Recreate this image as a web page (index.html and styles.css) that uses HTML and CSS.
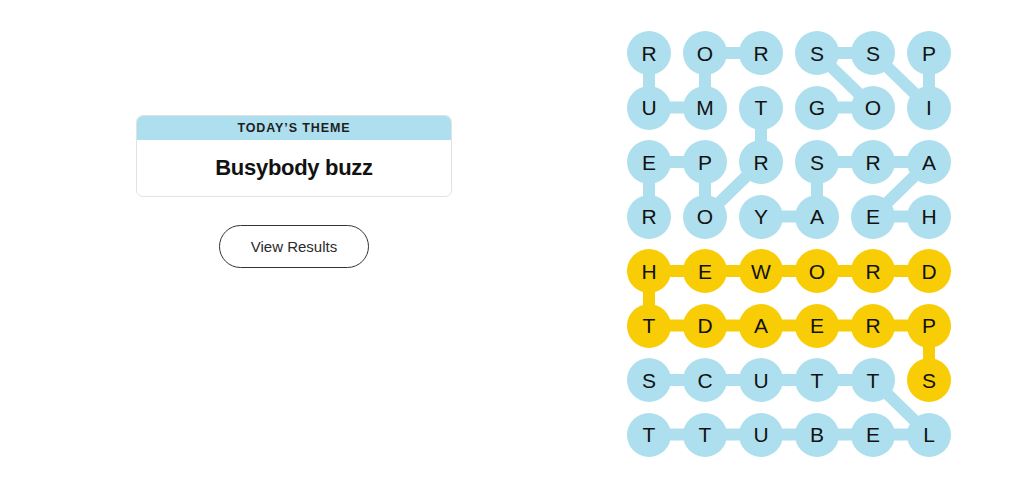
FILE: index.html
```html
<!DOCTYPE html>
<html lang="en">
<head>
<meta charset="utf-8">
<title>Strands</title>
<link rel="stylesheet" href="styles.css">
</head>
<body>
<main class="page">
  <section class="side">
    <div class="theme-card">
      <div class="theme-head">TODAY’S THEME</div>
      <div class="theme-body">Busybody buzz</div>
    </div>
    <button class="results-btn" type="button">View Results</button>
  </section>
  <section class="board-wrap">
    <div class="board">
      <svg class="links" width="324" height="426" viewBox="0 0 324 426" aria-hidden="true">
        <g fill="none" stroke-width="12" stroke-linejoin="round">
          <g stroke="#aedfee">
            <!-- RUMOR -->
            <polyline points="22,22 22,76.5 78,76.5 78,22 134,22"/>
            <!-- TROPER -->
            <polyline points="134,76.5 134,131 78,185.5 78,131 22,131 22,185.5"/>
            <!-- GOSSIP -->
            <polyline points="190,76.5 246,76.5 190,22 246,22 302,76.5 302,22"/>
            <!-- HEARSAY -->
            <polyline points="302,185.5 246,185.5 302,131 246,131 190,131 190,185.5 134,185.5"/>
            <!-- SCUTTLEBUTT -->
            <polyline points="22,349 246,349 302,403.5 22,403.5"/>
          </g>
          <g stroke="#f8cd05">
            <polyline points="302,240 22,240 22,294.5 302,294.5 302,349"/>
          </g>
        </g>
      </svg>
      <div class="grid">
        <span class="cell">R</span><span class="cell">O</span><span class="cell">R</span><span class="cell">S</span><span class="cell">S</span><span class="cell">P</span>
        <span class="cell">U</span><span class="cell">M</span><span class="cell">T</span><span class="cell">G</span><span class="cell">O</span><span class="cell">I</span>
        <span class="cell">E</span><span class="cell">P</span><span class="cell">R</span><span class="cell">S</span><span class="cell">R</span><span class="cell">A</span>
        <span class="cell">R</span><span class="cell">O</span><span class="cell">Y</span><span class="cell">A</span><span class="cell">E</span><span class="cell">H</span>
        <span class="cell gold">H</span><span class="cell gold">E</span><span class="cell gold">W</span><span class="cell gold">O</span><span class="cell gold">R</span><span class="cell gold">D</span>
        <span class="cell gold">T</span><span class="cell gold">D</span><span class="cell gold">A</span><span class="cell gold">E</span><span class="cell gold">R</span><span class="cell gold">P</span>
        <span class="cell">S</span><span class="cell">C</span><span class="cell">U</span><span class="cell">T</span><span class="cell">T</span><span class="cell gold">S</span>
        <span class="cell">T</span><span class="cell">T</span><span class="cell">U</span><span class="cell">B</span><span class="cell">E</span><span class="cell">L</span>
      </div>
    </div>
  </section>
</main>
</body>
</html>
```

FILE: styles.css
```css
html, body {
  margin: 0;
  padding: 0;
  background: #ffffff;
}

body {
  font-family: "Liberation Sans", Arial, sans-serif;
  color: #121212;
}

.page {
  display: flex;
  height: 488px;
  width: 1024px;
}

.side {
  width: 588px;
  display: flex;
  flex-direction: column;
  align-items: center;
  padding-top: 115px;
  box-sizing: border-box;
}

.theme-card {
  width: 316px;
  border: 1px solid #e2e2e2;
  border-radius: 7px;
  overflow: hidden;
  box-sizing: border-box;
}

.theme-head {
  background: #aedfee;
  height: 24px;
  line-height: 25px;
  text-align: center;
  font-size: 12.5px;
  font-weight: 700;
  letter-spacing: 0.9px;
  color: #1e1e1e;
}

.theme-body {
  height: 56px;
  line-height: 55px;
  text-align: center;
  font-size: 22px;
  font-weight: 700;
  color: #121212;
  letter-spacing: -0.3px;
}

.results-btn {
  margin-top: 28px;
  width: 150px;
  height: 43px;
  border: 1px solid #333333;
  border-radius: 22px;
  background: #ffffff;
  font-family: "Liberation Sans", Arial, sans-serif;
  font-size: 15px;
  color: #2a2a2a;
  padding: 0;
}

.board-wrap {
  flex: 1;
  display: flex;
  align-items: center;
  padding-left: 39px;
}

.board {
  position: relative;
  width: 324px;
  height: 426px;
}

.links {
  position: absolute;
  left: 0;
  top: 0;
}

.grid {
  position: relative;
  display: grid;
  grid-template-columns: repeat(6, 44px);
  grid-auto-rows: 44px;
  column-gap: 12px;
  row-gap: 10.5px;
}

.cell {
  width: 44px;
  height: 44px;
  border-radius: 50%;
  background: #aedfee;
  display: flex;
  align-items: center;
  justify-content: center;
  font-size: 21px;
  color: #121212;
  line-height: 1;
}

.cell.gold {
  background: #f8cd05;
}
```
